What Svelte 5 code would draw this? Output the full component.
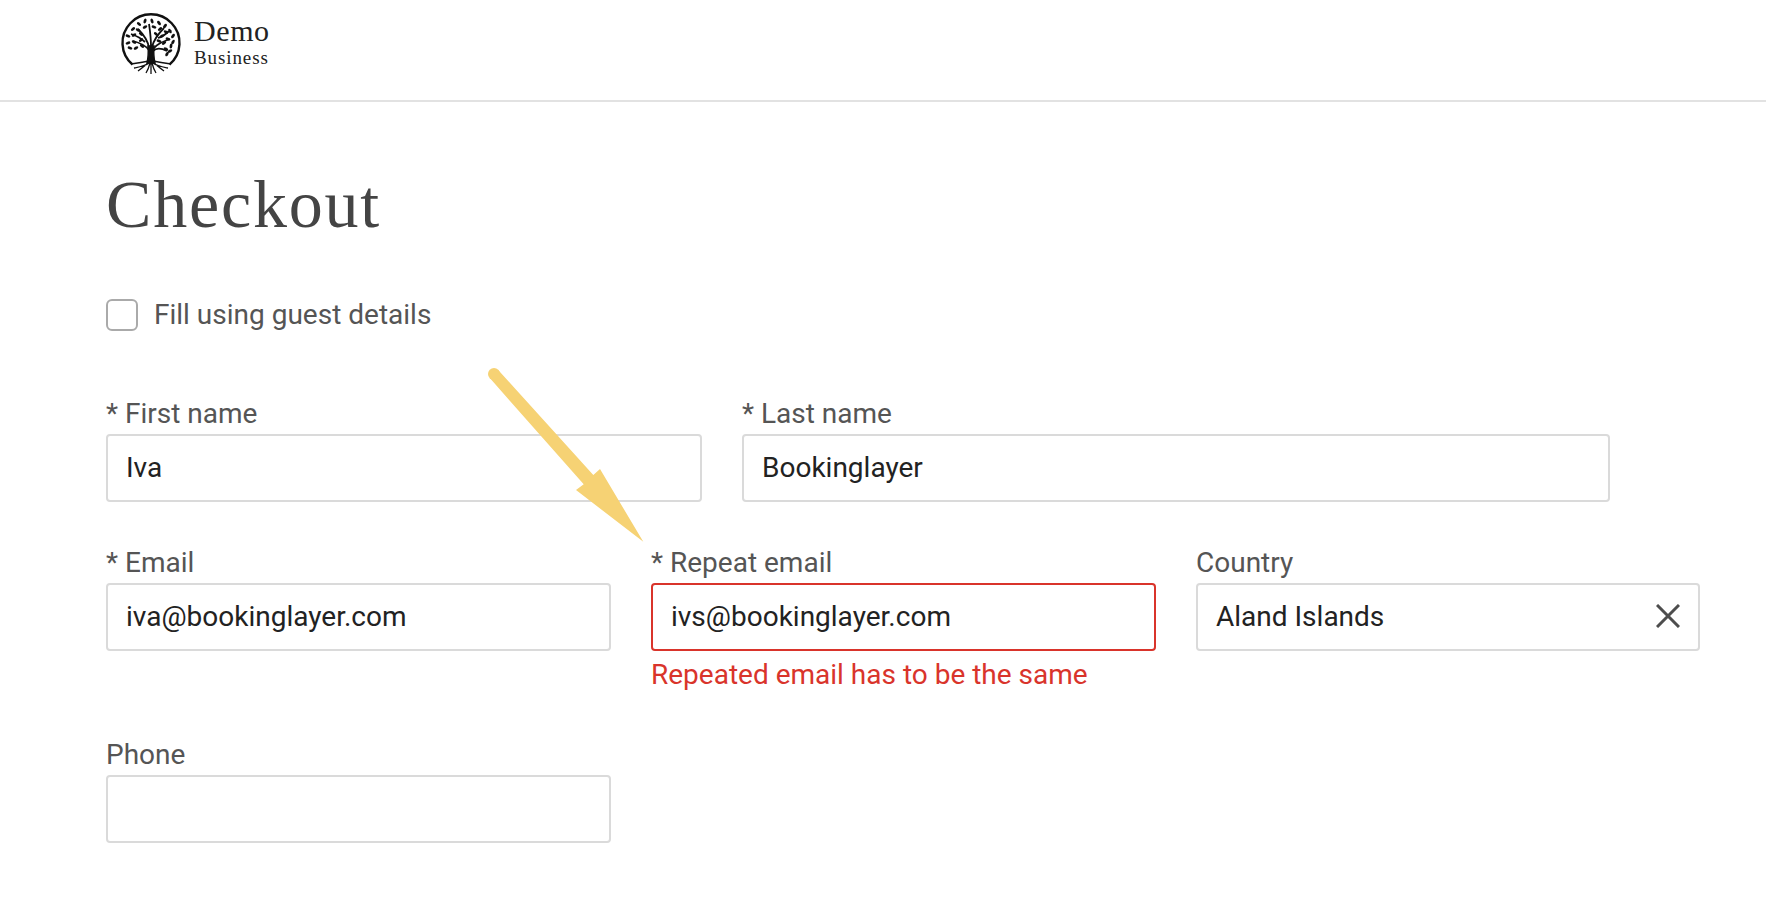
<script lang="ts">
    const leaves = [
        [-12, -19, 40], [-6, -22, 110], [1, -22, 70], [8, -20, 50], [14, -17, 130],
        [19, -12, 60], [-18, -14, 140], [-13, -13, 30], [-6, -16, 150], [3, -16, 20],
        [9, -14, 140], [15, -11, 30], [22, -7, 130], [-23, -7, 20], [-17, -8, 150],
        [-10, -9, 40], [5, -9, 40], [11, -7, 150], [17, -4, 20], [22, -1, 120],
        [-23, 0, 160], [-17, -1, 30], [-10, -3, 140], [8, -2, 20], [13, 0, 140],
        [-21, 5, 20], [-15, 5, 150], [-9, 3, 40], [20, 3, 100], [15, 6, 30],
        [19, 8, 150], [16, 11, 120]
    ];
</script>

<div class="page">
    <header class="topbar">
        <svg class="logo" viewBox="-31 -31 62 62" aria-hidden="true">
            <path class="ring" d="M-18.500 21.500A28.500 28.500 0 1 1 18.500 21.500" />
            <g class="tree">
                <path d="M-4 20C-2.500 14-2.500 9-3 3L3 3C2.500 9 2.500 14 4 20Z" class="trunk" />
                <path class="limb" d="M-2 7C-6 2-10 0-18-2M-2 5C-3-3-7-8-13-14M0 4C0-6-1-12-2-19M1 4C3-4 7-9 13-15M2 6C6 1 11-1 19-4M-6-1C-10-5-14-7-20-9M7-5C11-6 15-9 18-12M2 8C5 5 10 5 16 8" />
                <path class="root" d="M-2 18C-7 19-13 20-20 21M-2 19C-5 22-9 25-13 28M-1 20C-2 24-3 27-5 30M0 20C0 24 0 27 0 31M1 20C2 24 3 27 5 30M2 19C5 22 9 25 13 28M2 18C7 19 13 20 20 21M-2 20C-6 23-12 24-17 25M2 20C6 23 12 24 17 25" />
                {#each leaves as [x, y, r]}
                    <ellipse cx={x} cy={y} rx="2.500" ry="1.400" transform="rotate({r} {x} {y})" />
                {/each}
            </g>
        </svg>
        <div class="brand">
            <span class="brand-name">Demo</span>
            <span class="brand-sub">Business</span>
        </div>
    </header>

    <main class="content">
        <h1>Checkout</h1>

        <label class="guest">
            <span class="box"></span>
            Fill using guest details
        </label>

        <div class="row first">
            <div class="field name-first">
                <span class="label">* First name</span>
                <div class="input">Iva</div>
            </div>
            <div class="field name-last">
                <span class="label">* Last name</span>
                <div class="input">Bookinglayer</div>
            </div>
        </div>

        <div class="row second">
            <div class="field third">
                <span class="label">* Email</span>
                <div class="input">iva@bookinglayer.com</div>
            </div>
            <div class="field third">
                <span class="label">* Repeat email</span>
                <div class="input invalid">ivs@bookinglayer.com</div>
                <span class="error">Repeated email has to be the same</span>
            </div>
            <div class="field country">
                <span class="label">Country</span>
                <div class="input select">
                    Aland Islands
                    <svg class="clear" viewBox="0 0 24 24" aria-hidden="true">
                        <path d="M1 1 23 23M23 1 1 23" />
                    </svg>
                </div>
            </div>
        </div>

        <div class="row phone">
            <div class="field third">
                <span class="label">Phone</span>
                <div class="input"></div>
            </div>
        </div>
    </main>

    <svg class="arrow" viewBox="0 0 1766 922" aria-hidden="true">
        <path d="M489.800 378.100 498.200 369.900 593.300 475 600 469 643.300 541.800 576 490 583.700 484.300Z" />
        <circle cx="494" cy="374" r="6" />
    </svg>
</div>

<style>
    :global(body) {
        background: #fff;
    }

    .page {
        position: relative;
        width: 1766px;
        height: 922px;
        overflow: hidden;
        font-family: Roboto, sans-serif;
        color: #555;
    }

    .topbar {
        display: flex;
        align-items: center;
        gap: 12px;
        height: 102px;
        padding-left: 120px;
        box-sizing: border-box;
        border-bottom: 2px solid #e2e2e2;
    }

    .logo {
        width: 62px;
        height: 62px;
        margin-top: -15px;
    }

    .ring {
        fill: none;
        stroke: #111;
        stroke-width: 2.4;
    }

    .tree path {
        fill: none;
        stroke: #111;
        stroke-width: 1.5;
    }

    .tree .trunk {
        fill: #111;
    }

    .tree .limb {
        stroke-width: 1.8;
    }

    .tree .root {
        stroke-width: 1.3;
    }

    .tree ellipse {
        fill: #111;
    }

    .brand {
        display: flex;
        flex-direction: column;
        margin-top: -14px;
        font-family: "Liberation Serif", serif;
        color: #222;
    }

    .brand-name {
        font-size: 30px;
        line-height: 30px;
        letter-spacing: 0.6px;
    }

    .brand-sub {
        font-size: 19px;
        line-height: 24px;
        letter-spacing: 0.9px;
    }

    .content {
        padding: 0 0 0 106px;
    }

    h1 {
        margin: 58px 0 0;
        font-family: "Liberation Serif", serif;
        font-size: 68px;
        font-weight: 400;
        line-height: 88px;
        letter-spacing: 1.8px;
        color: #444;
    }

    .guest {
        display: flex;
        align-items: center;
        gap: 16px;
        margin-top: 50px;
        font-size: 28px;
        line-height: 34px;
    }

    .box {
        width: 32px;
        height: 32px;
        box-sizing: border-box;
        border: 2px solid #aaa;
        border-radius: 6px;
    }

    .row {
        display: flex;
        gap: 40px;
    }

    .first {
        margin-top: 65px;
    }

    .second {
        margin-top: 44px;
    }

    .phone {
        margin-top: 46px;
    }

    .field {
        display: flex;
        flex-direction: column;
    }

    .name-first {
        width: 596px;
    }

    .name-last {
        width: 868px;
    }

    .third {
        width: 505px;
    }

    .country {
        width: 504px;
    }

    .label {
        margin-bottom: 3px;
        font-size: 28px;
        line-height: 34px;
    }

    .input {
        display: flex;
        align-items: center;
        justify-content: space-between;
        height: 68px;
        padding: 0 18px 2px;
        box-sizing: border-box;
        border: 2px solid #dadada;
        border-radius: 4px;
        font-size: 28px;
        color: #222;
    }

    .invalid {
        border-color: #d9342b;
    }

    .error {
        margin-top: 7px;
        font-size: 28px;
        line-height: 34px;
        color: #d9342b;
    }

    .clear {
        width: 24px;
        height: 24px;
    }

    .clear path {
        fill: none;
        stroke: #4d4d4d;
        stroke-width: 3;
    }

    .arrow {
        position: absolute;
        inset: 0;
        width: 1766px;
        height: 922px;
        pointer-events: none;
    }

    .arrow path,
    .arrow circle {
        fill: #f6d274;
    }
</style>
